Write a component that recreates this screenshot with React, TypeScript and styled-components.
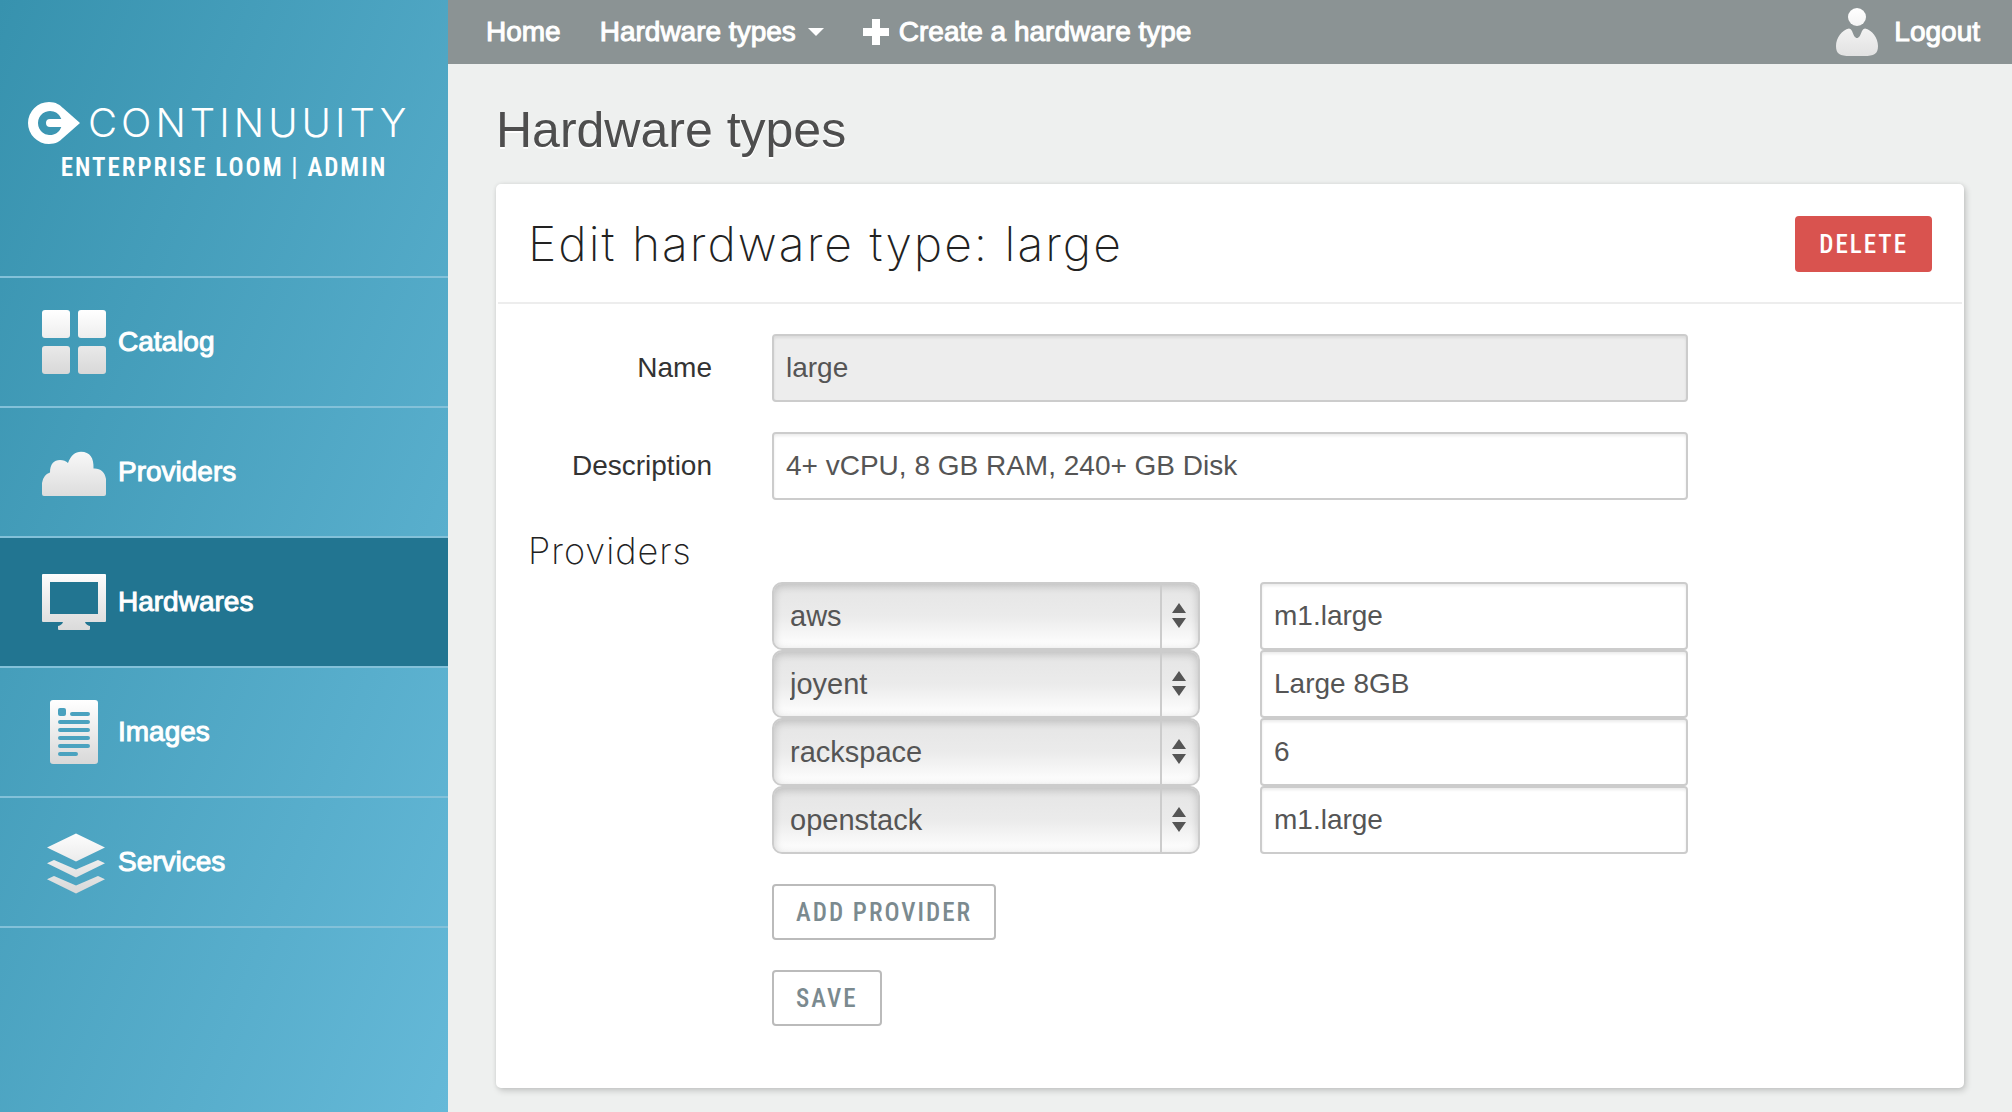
import React from "react";
import styled, { createGlobalStyle, css } from "styled-components";

const GlobalStyle = createGlobalStyle`
  *, *::before, *::after { box-sizing: border-box; }
  body {
    margin: 0;
    background: #eef0ef;
    color: #333;
    font-family: "Liberation Sans", Arial, sans-serif;
    font-size: 28px;
    line-height: 40px;
  }
  a { color: inherit; text-decoration: none; }
`;

const thin = css`
  font-family: Inter, "Liberation Sans", sans-serif;
  font-weight: 200;
  color: #222;
`;

const condensed = css`
  font-family: "Roboto Condensed", Roboto, sans-serif;
  font-weight: 500;
  font-size: 25px;
  letter-spacing: 2px;
  text-transform: uppercase;
`;

const Page = styled.div`
  display: grid;
  grid-template-columns: 448px minmax(0, 1fr);
  min-height: 100vh;
`;

const Sidebar = styled.aside`
  background: linear-gradient(to bottom right, #3792ae 0%, #65b9d8 100%);
  color: #fff;
`;

const Brand = styled.a`
  display: flex;
  flex-direction: column;
  align-items: center;
  height: 278px;
  padding-top: 102px;
  border-bottom: 2px solid #83c1d9;
`;

const BrandRow = styled.span`
  display: flex;
  align-items: center;
  align-self: flex-start;
  gap: 8px;
  height: 42px;
  padding-left: 28px;
`;

const Wordmark = styled.span`
  font-family: Inter, "Liberation Sans", sans-serif;
  font-weight: 300;
  font-size: 40px;
  line-height: 42px;
  letter-spacing: 4px;
`;

const Tagline = styled.span`
  ${condensed}
  margin-top: 6px;
  line-height: 36px;
  font-weight: 600;
`;

const NavItem = styled.a<{ $active?: boolean }>`
  display: flex;
  align-items: center;
  gap: 12px;
  height: 130px;
  padding-left: 42px;
  border-bottom: 2px solid #83c1d9;
  background: ${(p) => (p.$active ? "#227591" : "transparent")};
  -webkit-text-stroke: 1px #fff;
`;

const Main = styled.main`
  min-width: 0;
`;

const TopBar = styled.header`
  display: flex;
  align-items: center;
  justify-content: space-between;
  height: 64px;
  padding: 0 32px 0 38px;
  background: #8b9394;
  color: #fff;
  -webkit-text-stroke: 1px #fff;
`;

const TopLinks = styled.nav`
  display: flex;
  gap: 39px;
`;

const TopLink = styled.a<{ $gap: number }>`
  display: flex;
  align-items: center;
  gap: ${(p) => p.$gap}px;
`;

const Content = styled.div`
  padding: 36px 48px 24px;
`;

const PageTitle = styled.h1`
  margin: 0 0 24px;
  font-size: 50px;
  line-height: 60px;
  font-weight: 400;
  color: #4e4e4e;
  text-shadow: 0 2px 0 #fff;
`;

const Card = styled.section`
  border: 2px solid #fff;
  border-radius: 5px;
  background: #fff;
  box-shadow: 2px 3px 6px rgba(0, 0, 0, 0.16), 0 0 4px rgba(0, 0, 0, 0.08);
`;

const CardHeader = styled.div`
  display: flex;
  align-items: center;
  justify-content: space-between;
  padding: 30px;
  border-bottom: 2px solid #ededed;
`;

const CardTitle = styled.h2`
  ${thin}
  margin: 0;
  font-size: 48px;
  line-height: 56px;
  letter-spacing: 2px;
`;

const Button = styled.button<{ $danger?: boolean }>`
  ${condensed}
  height: 56px;
  padding: 0 22px;
  border: 2px solid ${(p) => (p.$danger ? "#d9534f" : "#bbb")};
  border-radius: 4px;
  background: ${(p) => (p.$danger ? "#d9534f" : "#fff")};
  color: ${(p) => (p.$danger ? "#fff" : "#7b8a8f")};
`;

const Form = styled.form`
  display: flex;
  flex-direction: column;
  gap: 30px;
  padding: 30px 0 60px;
`;

const FormRow = styled.div`
  display: grid;
  grid-template-columns: 2fr 8fr 2fr;
`;

const Label = styled.label`
  padding: 0 30px;
  text-align: right;
  line-height: 68px;
`;

const Cell = styled.div`
  padding: 0 30px;
`;

const TextInput = styled.input`
  display: block;
  width: 100%;
  height: 68px;
  padding: 0 12px;
  border: 2px solid #ccc;
  border-radius: 4px;
  background: #fff;
  box-shadow: inset 0 2px 3px rgba(0, 0, 0, 0.08);
  color: #555;
  font: 28px "Liberation Sans", Arial, sans-serif;
  &:disabled { background: #ededed; }
`;

const ProviderGroup = styled.fieldset`
  min-width: 0;
  margin: 0;
  padding: 0;
  border: 0;
`;

const GroupTitle = styled.legend`
  ${thin}
  padding: 0 30px;
  margin-bottom: 10px;
  font-size: 36px;
  line-height: 42px;
  letter-spacing: 1px;
`;

const ProviderRow = styled.div`
  display: grid;
  grid-template-columns: 4fr 4fr;
  margin: 0 calc(100% / 6);
`;

const SelectBox = styled.div`
  display: grid;
  grid-template-columns: 1fr 40px;
  align-items: center;
`;

const Select = styled.select`
  grid-area: 1 / 1 / 2 / 3;
  appearance: none;
  width: 100%;
  height: 68px;
  padding: 0 16px;
  border: 2px solid #ccc;
  border-radius: 10px;
  background: linear-gradient(#e5e5e5 0%, #ebebeb 50%, #fff 100%);
  box-shadow: inset 0 2px 8px rgba(0, 0, 0, 0.18);
  color: #555;
  font: 29px "Liberation Sans", Arial, sans-serif;
`;

const Stepper = styled.span`
  grid-area: 1 / 2 / 2 / 3;
  display: flex;
  align-items: center;
  justify-content: center;
  height: 64px;
  padding-right: 4px;
  border-left: 2px solid #ccc;
  pointer-events: none;
`;

const Actions = styled.div`
  display: flex;
  flex-direction: column;
  align-items: flex-start;
  gap: 30px;
  margin-left: calc(100% / 6);
  padding: 0 30px;
`;

function Shade({ id }: { id: string }) {
  return (
    <defs>
      <linearGradient id={id} gradientUnits="userSpaceOnUse" x1="0" y1="0" x2="0" y2="64">
        <stop offset="0" stopColor="#fff" />
        <stop offset="1" stopColor="#d8d8d8" />
      </linearGradient>
    </defs>
  );
}

const shapes: Record<string, React.ReactNode> = {
  Catalog: (
    <>
      <rect width="28" height="28" rx="3" />
      <rect x="36" width="28" height="28" rx="3" />
      <rect y="36" width="28" height="28" rx="3" />
      <rect x="36" y="36" width="28" height="28" rx="3" />
    </>
  ),
  Providers: (
    <path d="M2 56Q0 56 0 54V43Q1 35 8 32.5C8 24 12 20 18 20Q23 20 26 23C29 15 33 11.700 39 11.700C48 11.700 52 18 51.500 28.500C58 28 63 32 64 39V54Q64 56 62 56Z" />
  ),
  Hardwares: (
    <path
      fillRule="evenodd"
      d="M1 4H63Q64 4 64 5V51Q64 52 63 52H43Q44 55 48 56V59Q48 60 47 60H17Q16 60 16 59V56Q20 55 21 52H1Q0 52 0 51V5Q0 4 1 4ZM8 12V44H56V12Z"
    />
  ),
  Images: (
    <path
      fillRule="evenodd"
      d="M11 0H53Q56 0 56 3V61Q56 64 53 64H11Q8 64 8 61V3Q8 0 11 0ZM18 8Q16 8 16 10V14Q16 16 18 16H22Q24 16 24 14V10Q24 8 22 8ZM30 12a2 2 0 0 0 0 4H46a2 2 0 0 0 0-4ZM18 20a2 2 0 0 0 0 4H46a2 2 0 0 0 0-4ZM18 28a2 2 0 0 0 0 4H46a2 2 0 0 0 0-4ZM18 36a2 2 0 0 0 0 4H46a2 2 0 0 0 0-4ZM18 44a2 2 0 0 0 0 4H46a2 2 0 0 0 0-4ZM18 52a2 2 0 0 0 0 4H34a2 2 0 0 0 0-4Z"
    />
  ),
  Services: (
    <path d="M34 3.500L63 17.500L34 31.500L5 17.500ZM5 33.300L12 30L34 39.500L56 30L63 33.300L34 47.500ZM5 49.300L12 46L34 55.500L56 46L63 49.300L34 63.500Z" />
  ),
};

function NavIcon({ name }: { name: string }) {
  const id = `shade-${name}`;
  return (
    <svg width="64" height="64" viewBox="0 0 64 64" fill={`url(#${id})`} aria-hidden="true">
      <Shade id={id} />
      {shapes[name]}
    </svg>
  );
}

const navItems = ["Catalog", "Providers", "Hardwares", "Images", "Services"];

const providerNames = ["aws", "joyent", "rackspace", "openstack"];

const providers = [
  { name: "aws", flavor: "m1.large" },
  { name: "joyent", flavor: "Large 8GB" },
  { name: "rackspace", flavor: "6" },
  { name: "openstack", flavor: "m1.large" },
];

export default function App() {
  return (
    <Page>
      <GlobalStyle />
      <Sidebar>
        <Brand href="#">
          <BrandRow>
            <svg width="52" height="42" viewBox="0 0 52 42" aria-hidden="true">
              <path
                fill="#fff"
                fillRule="evenodd"
                d="M21 0C28 0 32 3 35 6L52 21L35 36C32 39 28 42 21 42A21 21 0 0 1 21 0ZM33.300 17A12 12 0 1 0 33.300 25H22A4 4 0 0 1 22 17Z"
              />
            </svg>
            <Wordmark>CONTINUUITY</Wordmark>
          </BrandRow>
          <Tagline>Enterprise Loom | Admin</Tagline>
        </Brand>
        <nav>
          {navItems.map((item) => (
            <NavItem key={item} href="#" $active={item === "Hardwares"}>
              <NavIcon name={item} />
              {item}
            </NavItem>
          ))}
        </nav>
      </Sidebar>
      <Main>
        <TopBar>
          <TopLinks>
            <TopLink href="#" $gap={0}>Home</TopLink>
            <TopLink href="#" $gap={12}>
              Hardware types
              <svg width="16" height="8" viewBox="0 0 16 8" aria-hidden="true">
                <path d="M0 0H16L8 8Z" fill="#fff" />
              </svg>
            </TopLink>
            <TopLink href="#" $gap={10}>
              <svg width="26" height="26" viewBox="0 0 26 26" aria-hidden="true">
                <path d="M9 0H17V9H26V17H17V26H9V17H0V9H9Z" fill="#fff" />
              </svg>
              Create a hardware type
            </TopLink>
          </TopLinks>
          <TopLink href="#" $gap={16}>
            <svg width="42" height="48" viewBox="0 0 42 48" fill="url(#shade-user)" aria-hidden="true">
              <Shade id="shade-user" />
              <circle cx="21" cy="9" r="9" />
              <path d="M13 20.500Q15 20.500 16 23C18 28 19 30 21 30C23 30 24 28 26 23Q27 20.500 29 20.500C36 22 42 30 42 38C42 46 38 48 28 48H14C4 48 0 46 0 38C0 30 6 22 13 20.500Z" />
            </svg>
            Logout
          </TopLink>
        </TopBar>
        <Content>
          <PageTitle>Hardware types</PageTitle>
          <Card>
            <CardHeader>
              <CardTitle>Edit hardware type: large</CardTitle>
              <Button type="button" $danger>Delete</Button>
            </CardHeader>
            <Form>
              <FormRow>
                <Label htmlFor="name">Name</Label>
                <Cell>
                  <TextInput id="name" defaultValue="large" disabled />
                </Cell>
              </FormRow>
              <FormRow>
                <Label htmlFor="description">Description</Label>
                <Cell>
                  <TextInput id="description" defaultValue="4+ vCPU, 8 GB RAM, 240+ GB Disk" />
                </Cell>
              </FormRow>
              <ProviderGroup>
                <GroupTitle>Providers</GroupTitle>
                {providers.map((p) => (
                  <ProviderRow key={p.name}>
                    <Cell>
                      <SelectBox>
                        <Select aria-label="Provider" defaultValue={p.name}>
                          {providerNames.map((n) => (
                            <option key={n}>{n}</option>
                          ))}
                        </Select>
                        <Stepper>
                          <svg width="14" height="26" viewBox="0 0 14 26" aria-hidden="true">
                            <path d="M7 0L14 10H0ZM0 15H14L7 25Z" fill="#555" />
                          </svg>
                        </Stepper>
                      </SelectBox>
                    </Cell>
                    <Cell>
                      <TextInput aria-label={`${p.name} flavor`} defaultValue={p.flavor} />
                    </Cell>
                  </ProviderRow>
                ))}
              </ProviderGroup>
              <Actions>
                <Button type="button">Add provider</Button>
                <Button type="submit">Save</Button>
              </Actions>
            </Form>
          </Card>
        </Content>
      </Main>
    </Page>
  );
}
